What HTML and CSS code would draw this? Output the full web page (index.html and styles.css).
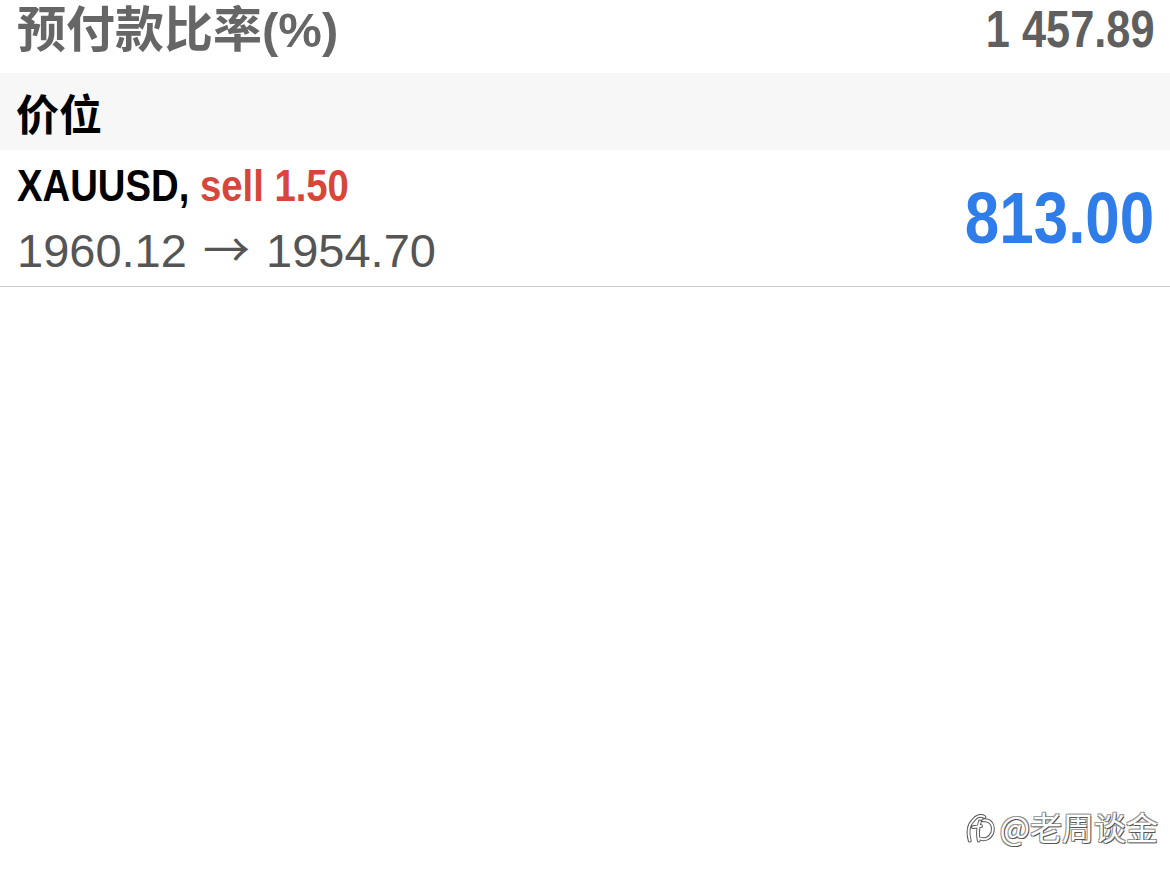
FILE: index.html
```html
<!DOCTYPE html>
<html lang="zh-CN">
<head>
  <meta charset="UTF-8">
  <meta name="viewport" content="width=device-width, initial-scale=1.0">
  <title>交易</title>
  <link rel="stylesheet" href="styles.css">
</head>
<body>

  <div class="summary-row">
    <span class="summary-label">预付款比率(%)</span>
    <span class="summary-value">1 457.89</span>
  </div>

  <div class="section-head">价位</div>

  <div class="position-row">
    <div class="position-info">
      <div class="position-title">XAUUSD, <span class="sell">sell 1.50</span></div>
      <div class="position-prices">1960.12 <span class="arrow">→</span> 1954.70</div>
    </div>
    <div class="position-profit">813.00</div>
  </div>

  <div class="watermark">
    <svg class="wm-icon" width="34" height="36" viewBox="0 0 30 32">
      <path d="M5 29 C3 22 4 15 8 11 C11 7 15 6 18 8 M8 17 L15 16 M14 12 C12 18 12 24 13 29 M17 11 C23 10 27 15 25 22 C23 27 18 29 14 27" fill="none" stroke="#555" stroke-width="3.4" stroke-linecap="round"/>
      <path d="M5 29 C3 22 4 15 8 11 C11 7 15 6 18 8 M8 17 L15 16 M14 12 C12 18 12 24 13 29 M17 11 C23 10 27 15 25 22 C23 27 18 29 14 27" fill="none" stroke="#fff" stroke-width="1.7" stroke-linecap="round"/>
    </svg>
    <span class="wm-text">@老周谈金</span>
  </div>

</body>
</html>
```

FILE: styles.css
```css
* { box-sizing: border-box; margin: 0; padding: 0; }
body {
  font-family: "Liberation Sans", "Noto Sans CJK SC", sans-serif;
  background: #fff;
  width: 1170px;
  height: 879px;
  overflow: hidden;
  position: relative;
}
.summary-row {
  height: 73px;
  display: flex;
  justify-content: space-between;
  align-items: flex-start;
  padding: 0 15px 0 17px;
  line-height: 60px;
}
.summary-label {
  font-family: "Liberation Sans", "Noto Sans CJK SC", sans-serif;
  font-weight: bold;
  font-size: 49px;
  color: #666;
}
.summary-value {
  display: inline-block;
  font-weight: bold;
  font-size: 51px;
  color: #5f5f5f;
  transform: scaleX(0.85);
  transform-origin: right center;
}
.section-head {
  height: 77px;
  background: #f7f7f7;
  display: flex;
  align-items: center;
  padding-left: 16px;
  font-family: "Noto Sans CJK SC", sans-serif;
  font-weight: bold;
  font-size: 43px;
  color: #000;
}
.position-row {
  height: 137px;
  display: flex;
  justify-content: space-between;
  align-items: center;
  padding: 0 16px 0 17px;
  border-bottom: 1px solid #cbcbcb;
}
.position-info {
  display: flex;
  flex-direction: column;
  align-items: flex-start;
  gap: 10px;
  padding-top: 2px;
}
.position-title {
  font-weight: bold;
  font-size: 44px;
  line-height: 50px;
  color: #000;
  white-space: nowrap;
  transform: scaleX(0.87);
  transform-origin: left center;
}
.sell { color: #d7463b; }
.position-prices {
  font-size: 47px;
  line-height: 52px;
  color: #555;
  white-space: nowrap;
  word-spacing: 3px;
}
.arrow {
  font-family: "Noto Sans CJK SC", sans-serif;
  font-size: 47px;
}
.position-profit {
  display: inline-block;
  font-weight: bold;
  font-size: 72px;
  color: #2f7de9;
  transform: scaleX(0.86);
  transform-origin: right center;
}
.watermark {
  position: absolute;
  right: 12px;
  bottom: 30px;
  display: flex;
  align-items: center;
  gap: 2px;
}
.wm-text {
  font-family: "Noto Sans CJK SC", sans-serif;
  font-size: 32px;
  color: #fff;
  text-shadow: 1px 1px 0 #555, -1px -1px 0 #999, 1px -1px 0 #888, -1px 1px 0 #888;
}
```
